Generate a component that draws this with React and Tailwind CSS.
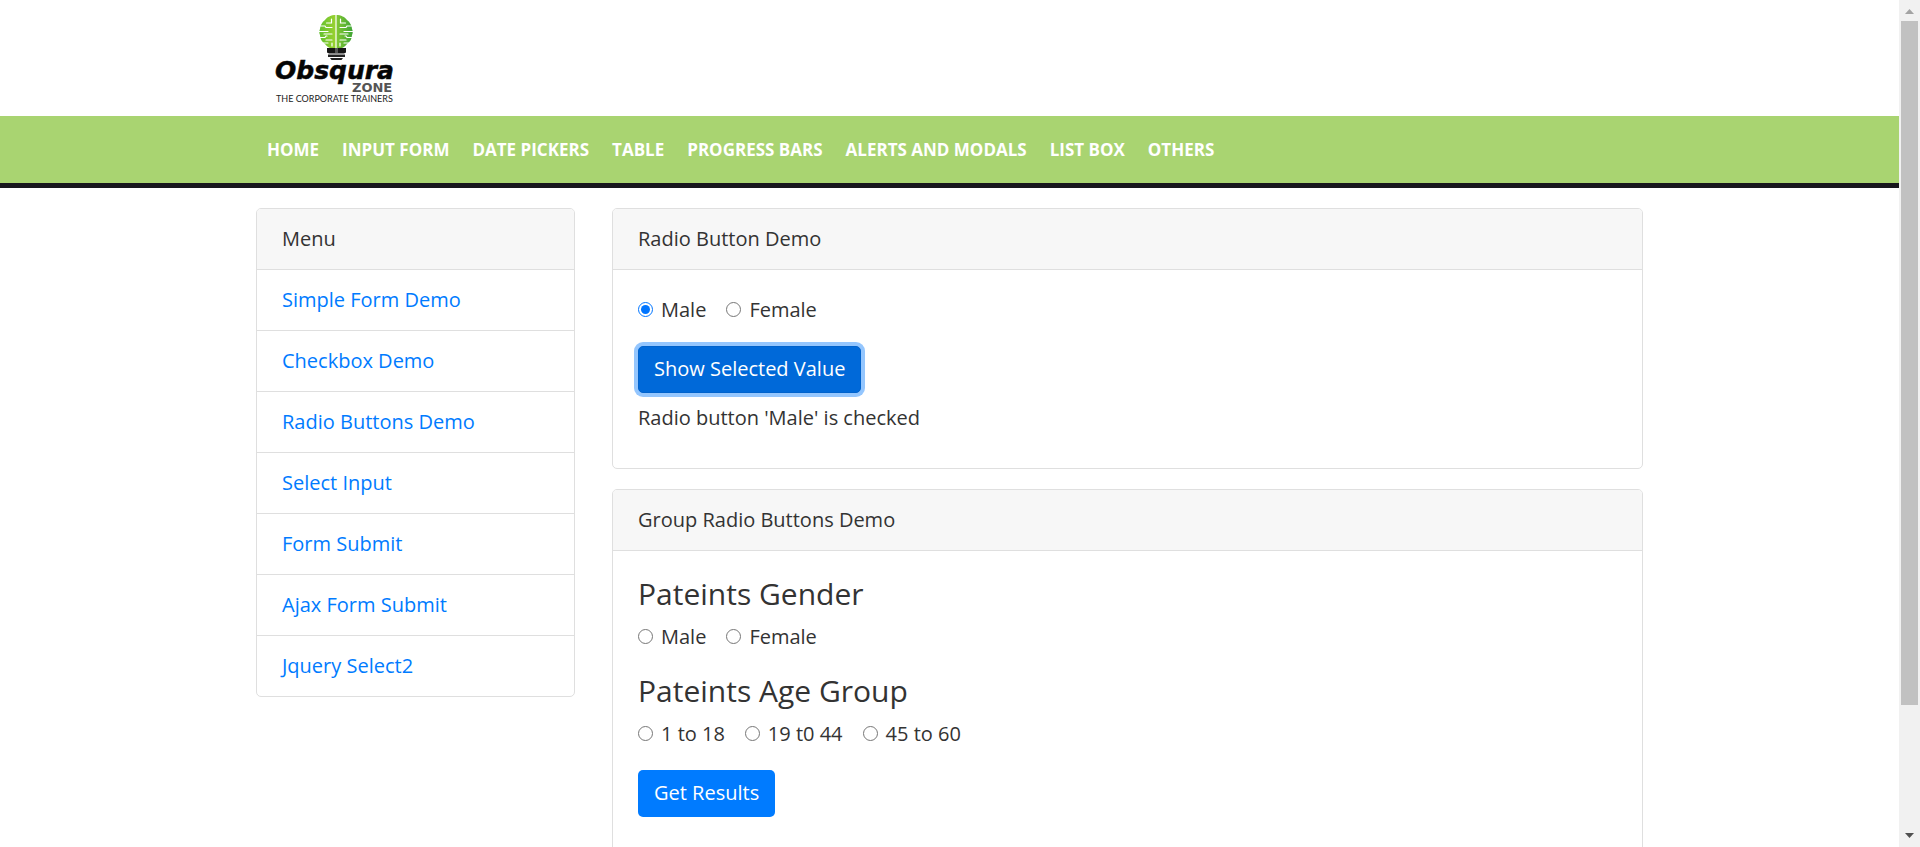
import React, { useState } from "react";

const navItems = ["HOME", "INPUT FORM", "DATE PICKERS", "TABLE", "PROGRESS BARS", "ALERTS AND MODALS", "LIST BOX", "OTHERS"];
const menuItems = ["Simple Form Demo", "Checkbox Demo", "Radio Buttons Demo", "Select Input", "Form Submit", "Ajax Form Submit", "Jquery Select2"];

function Logo() {
  return (
    <svg width="150" height="116" viewBox="0 0 150 116" role="img" aria-label="Obsqura Zone" className="block">
      <defs>
        <linearGradient id="bulb" x1="0" x2="1" y1="0" y2="0">
          <stop offset="0" stopColor="#62c030" />
          <stop offset="0.49" stopColor="#9ad22f" />
          <stop offset="0.5" stopColor="#84c832" />
          <stop offset="1" stopColor="#3fa535" />
        </linearGradient>
      </defs>
      <path d="M76 15c-5 0-9 2-11 5-3 2-5 6-5 9-1 2-1 4 0 6 0 4 2 7 5 9 2 3 6 5 11 5s9-2 11-5c3-2 5-5 5-9 1-2 1-4 0-6 0-3-2-7-5-9-2-3-6-5-11-5z" fill="url(#bulb)" />
      <g stroke="#fff" fill="none" strokeWidth="1.200" strokeLinecap="round">
        <path d="M76 14.500v35" />
        <path d="M71.500 19v4h-5M60 26h5l1 1.500h6M59 31.500h9M64 34h8M59 37.500h6l1-1.500h1M66 40h6M63 43h5M72 43v3" />
        <path d="M80.500 19v4h5M92 26h-5l-1 1.500h-6M93 31.500h-9M88 34h-8M93 37.500h-6l-1-1.500h-1M86 40h-6M89 43h-5M80 43v3" />
      </g>
      <path d="M67 48h19v4.500l-2 1H69l-2-1z" fill="#161616" />
      <path d="M68 54.500h17V57H68zM70 58h13l-1.500 2h-10z" fill="#222" />
      <path d="M75 48h3v5h-3z" fill="#555" />
      <text x="15" y="79" fontFamily="DejaVu Sans, sans-serif" fontWeight="700" fontStyle="oblique" fontSize="25" fill="#050505" stroke="#050505" strokeWidth="0.500">Obsqura</text>
      <text x="92" y="92" fontFamily="DejaVu Sans, sans-serif" fontWeight="700" fontSize="13" fill="#555">ZONE</text>
      <text x="16" y="102" fontFamily="Lato, sans-serif" fontSize="9" fill="#222">THE CORPORATE TRAINERS</text>
    </svg>
  );
}

function Card({ title, children }) {
  return (
    <section className="overflow-hidden rounded-[5px] border border-[#dfdfdf] bg-white">
      <h2 className="border-b border-[#dfdfdf] bg-[#f7f7f7] px-[25px] py-[15px]">{title}</h2>
      {children}
    </section>
  );
}

function RadioRow({ name, options, value, onChange }) {
  return (
    <div className="mb-[21px] flex gap-5">
      {options.map((option) => (
        <label key={option} className="flex items-center gap-2">
          <input
            type="radio"
            name={name}
            checked={value === option}
            onChange={() => onChange(option)}
            className="mb-0.5 size-[15px] accent-[#0075ff]"
          />
          {option}
        </label>
      ))}
    </div>
  );
}

function Scrollbar() {
  return (
    <div aria-hidden="true" className="flex w-[21px] shrink-0 flex-col items-center bg-[#f1f1f1]">
      <svg className="h-[21px] w-[21px] shrink-0" viewBox="0 0 21 21"><path d="M6 14l4.500-5 4.500 5z" fill="#a3a3a3" /></svg>
      <div className="min-h-0 w-[17px] flex-1">
        <div className="h-[85%] bg-[#c1c1c1]" />
      </div>
      <svg className="h-[21px] w-[21px] shrink-0" viewBox="0 0 21 21"><path d="M6 7l4.500 5 4.500-5z" fill="#505050" /></svg>
    </div>
  );
}

export default function App() {
  const [choice, setChoice] = useState("Male");
  const [shown, setShown] = useState("Male");
  const [gender, setGender] = useState("");
  const [age, setAge] = useState("");
  return (
    <div className="flex h-screen bg-white font-['Open_Sans',sans-serif] text-[20px] leading-[30px] text-[#333]">
      <div className="min-w-0 flex-1 overflow-hidden">
        <header className="mx-auto max-w-[1425px] px-[23px]">
          <a href="#home" className="block w-fit"><Logo /></a>
        </header>
        <nav className="border-b-[5px] border-[#17161c] bg-[#a9d471]">
          <ul className="mx-auto flex h-[67px] max-w-[1425px] items-center gap-[23px] px-[30px] text-[17px] font-bold text-white">
            {navItems.map((item) => (
              <li key={item}><a href="#nav">{item}</a></li>
            ))}
          </ul>
        </nav>
        <div className="mx-auto flex max-w-[1425px] items-start gap-[37px] px-[19px] pt-5">
          <aside className="w-[23%] shrink-0">
            <Card title="Menu">
              <ul className="divide-y divide-[#dfdfdf] text-[#007bff]">
                {menuItems.map((item) => (
                  <li key={item} className="px-[25px] py-[15px]"><a href="#menu">{item}</a></li>
                ))}
              </ul>
            </Card>
          </aside>
          <main className="flex min-w-0 flex-1 flex-col gap-5">
            <Card title="Radio Button Demo">
              <div className="px-[25px] pt-[25px] pb-[35px]">
                <RadioRow name="choice" options={["Male", "Female"]} value={choice} onChange={setChoice} />
                <button
                  type="button"
                  onClick={() => setShown(choice)}
                  className="block h-[47px] rounded-[5px] border border-[#0062cc] bg-[#0069d9] px-[15px] pb-0.5 text-white ring-4 ring-[#94c6fe]"
                >
                  Show Selected Value
                </button>
                <p className="mt-[10px]">Radio button '{shown}' is checked</p>
              </div>
            </Card>
            <Card title="Group Radio Buttons Demo">
              <div className="px-[25px] pt-[25px] pb-[75px]">
                <h3 className="mb-[10px] text-[30px] leading-[36px]">Pateints Gender</h3>
                <RadioRow name="gender" options={["Male", "Female"]} value={gender} onChange={setGender} />
                <h3 className="mb-[10px] text-[30px] leading-[36px]">Pateints Age Group</h3>
                <RadioRow name="age" options={["1 to 18", "19 t0 44", "45 to 60"]} value={age} onChange={setAge} />
                <button type="button" className="block h-[47px] rounded-[5px] bg-[#007bff] px-4 pb-0.5 text-white">Get Results</button>
              </div>
            </Card>
          </main>
        </div>
      </div>
      <Scrollbar />
    </div>
  );
}
